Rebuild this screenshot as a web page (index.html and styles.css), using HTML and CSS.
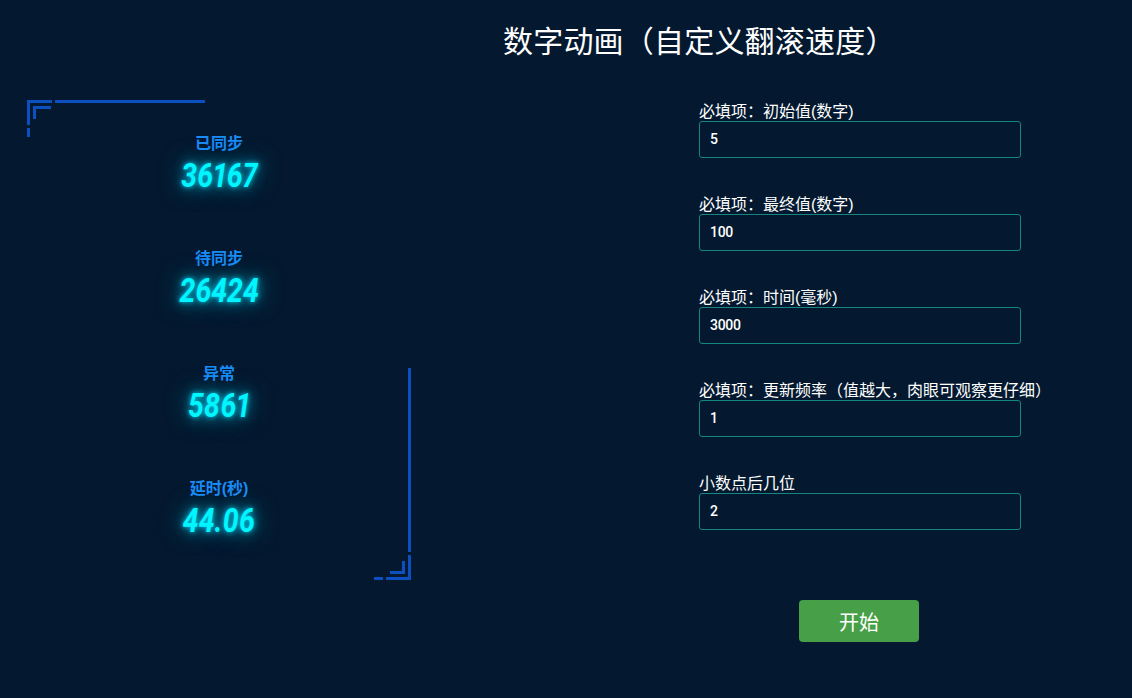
FILE: index.html
```html
<!DOCTYPE html>
<html lang="en">
<head>
    <meta charset="UTF-8">
    <title>数字动画</title>
    <link rel="stylesheet" href="styles.css">
</head>
<body>
    <h1 class="title">数字动画（自定义翻滚速度）</h1>

    <div class="content">
        <section class="stats">
            <svg class="corner corner-top" width="180" height="38" viewBox="0 0 180 38">
                <path d="M0 0h25v3H3v22H0zM28 0h150v3H28zM6 6h18v3H9v10H6zM0 28h3v9H0z" fill="#0b4fc0"/>
            </svg>
            <svg class="corner corner-bottom" width="38" height="213" viewBox="0 0 38 213">
                <path d="M35 1h3v184h-3zM35 188h3v25H13v-3h22zM29 194h3v13H17v-3h12zM1 210h9v3H1z" fill="#0b4fc0"/>
            </svg>

            <div class="stat">
                <div class="stat-label">已同步</div>
                <div class="stat-value">36167</div>
            </div>
            <div class="stat">
                <div class="stat-label">待同步</div>
                <div class="stat-value">26424</div>
            </div>
            <div class="stat">
                <div class="stat-label">异常</div>
                <div class="stat-value">5861</div>
            </div>
            <div class="stat">
                <div class="stat-label">延时(秒)</div>
                <div class="stat-value">44.06</div>
            </div>
        </section>

        <form class="settings">
            <div class="field">
                <label for="start">必填项：初始值(数字)</label>
                <input id="start" type="text" value="5">
            </div>
            <div class="field">
                <label for="end">必填项：最终值(数字)</label>
                <input id="end" type="text" value="100">
            </div>
            <div class="field">
                <label for="time">必填项：时间(毫秒)</label>
                <input id="time" type="text" value="3000">
            </div>
            <div class="field">
                <label for="rate">必填项：更新频率（值越大，肉眼可观察更仔细）</label>
                <input id="rate" type="text" value="1">
            </div>
            <div class="field">
                <label for="decimals">小数点后几位</label>
                <input id="decimals" type="text" value="2">
            </div>
            <button class="start-button" type="button">开始</button>
        </form>
    </div>
</body>
</html>
```

FILE: styles.css
```css
body {
    margin: 0;
    height: 698px;
    overflow: hidden;
    background-color: #04192f;
    color: #fff;
    font-family: "Liberation Sans", "Noto Sans CJK SC", sans-serif;
}

.title {
    margin: 0;
    padding: 21px 0 0 503px;
    height: 79px;
    font-size: 30px;
    font-weight: 400;
    letter-spacing: 0.2px;
    line-height: 42px;
    white-space: nowrap;
}

.content {
    display: flex;
    align-items: flex-start;
}

.stats {
    position: relative;
    display: flex;
    flex-direction: column;
    align-items: center;
    box-sizing: border-box;
    width: 384px;
    height: 480px;
    margin-left: 27px;
    padding-top: 33px;
}

.corner {
    position: absolute;
}

.corner-top {
    top: 0;
    left: 0;
}

.corner-bottom {
    right: 0;
    bottom: 0;
}

.stat {
    flex: none;
    height: 115px;
    text-align: center;
}

.stat-label {
    height: 24px;
    font-size: 16px;
    font-weight: 700;
    line-height: 22px;
    color: #1a8cf5;
}

.stat-value {
    font-family: Roboto, "Liberation Sans", sans-serif;
    font-size: 33px;
    font-style: italic;
    font-variant-numeric: proportional-nums;
    font-weight: 700;
    line-height: 38px;
    color: #00f6ff;
    text-shadow: 0 0 6px #00c8e8, 0 0 14px rgba(0, 190, 220, 0.7), 0 0 26px rgba(0, 190, 220, 0.6);
    transform: scaleX(0.86);
}

.settings {
    display: flex;
    flex-direction: column;
    width: 322px;
    margin: 0 0 0 288px;
}

.field {
    height: 93px;
}

.field label {
    display: block;
    height: 21px;
    font-size: 16px;
    line-height: 24px;
    white-space: nowrap;
}

.field input {
    display: block;
    box-sizing: border-box;
    width: 322px;
    height: 37px;
    padding: 0 10px 2px;
    background: #04192f;
    border: 1px solid #14867f;
    border-radius: 3px;
    color: #fff;
    font-family: Roboto, "Liberation Sans", sans-serif;
    font-size: 14px;
    font-weight: 500;
    letter-spacing: -0.3px;
    outline: none;
}

.start-button {
    align-self: flex-start;
    width: 120px;
    height: 42px;
    margin: 35px 0 0 100px;
    background-color: #479f48;
    border: none;
    border-radius: 4px;
    color: #fff;
    font-family: inherit;
    font-size: 20px;
}
```
